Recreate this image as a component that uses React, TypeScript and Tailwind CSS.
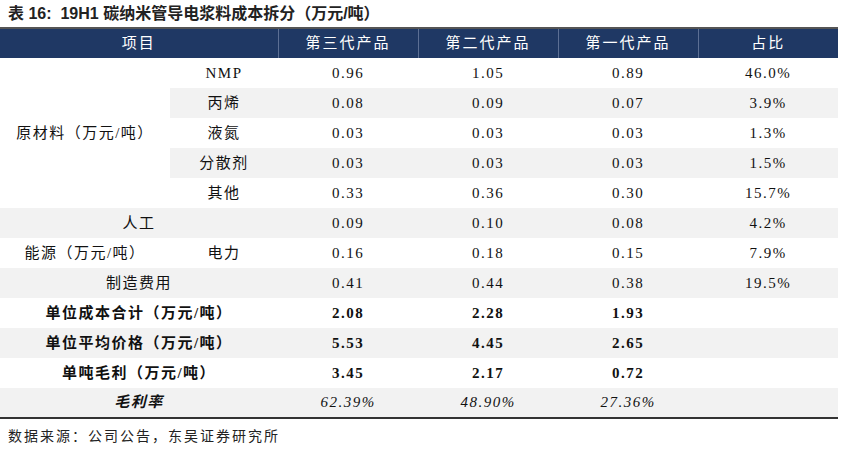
const rows: {
  label?: string;
  sub?: string;
  span?: boolean;
  vals: string[];
  gray: boolean;
  kind?: "bold" | "italic";
}[] = [
  { sub: "NMP", vals: ["0.96", "1.05", "0.89", "46.0%"], gray: false },
  { sub: "丙烯", vals: ["0.08", "0.09", "0.07", "3.9%"], gray: true },
  { sub: "液氮", vals: ["0.03", "0.03", "0.03", "1.3%"], gray: false },
  { sub: "分散剂", vals: ["0.03", "0.03", "0.03", "1.5%"], gray: true },
  { sub: "其他", vals: ["0.33", "0.36", "0.30", "15.7%"], gray: false },
  { label: "人工", span: true, vals: ["0.09", "0.10", "0.08", "4.2%"], gray: true },
  { label: "能源（万元/吨）", sub: "电力", vals: ["0.16", "0.18", "0.15", "7.9%"], gray: false },
  { label: "制造费用", span: true, vals: ["0.41", "0.44", "0.38", "19.5%"], gray: true },
  { label: "单位成本合计（万元/吨）", span: true, vals: ["2.08", "2.28", "1.93", ""], gray: false, kind: "bold" },
  { label: "单位平均价格（万元/吨）", span: true, vals: ["5.53", "4.45", "2.65", ""], gray: true, kind: "bold" },
  { label: "单吨毛利（万元/吨）", span: true, vals: ["3.45", "2.17", "0.72", ""], gray: false, kind: "bold" },
  { label: "毛利率", span: true, vals: ["62.39%", "48.90%", "27.36%", ""], gray: true, kind: "italic" },
];

export default function App() {
  return (
    <div
      className="w-[845px] h-[471px] bg-white text-[#111] overflow-hidden"
      style={{ fontFamily: '"Liberation Serif", "Noto Sans CJK SC", serif' }}
    >
      <div
        className="h-[27px] pl-2 flex items-center text-[16px] font-bold text-[#222]"
        style={{ fontFamily: '"Liberation Sans", "Noto Sans CJK SC", sans-serif' }}
      >
        表 16:&nbsp; 19H1 碳纳米管导电浆料成本拆分（万元/吨）
      </div>
      <table className="w-[838px] table-fixed border-collapse border-t-2 border-t-[#555] border-b-2 border-b-[#333]">
        <colgroup>
          <col className="w-[170px]" />
          <col className="w-[108px]" />
          <col className="w-[140px]" />
          <col className="w-[140px]" />
          <col className="w-[140px]" />
          <col className="w-[140px]" />
        </colgroup>
        <thead>
          <tr className="h-[30px] bg-[#1f3864] text-white text-[15px] tracking-[2px]">
            <th colSpan={2} className="font-normal border-r border-[#5c6f94]">项目</th>
            <th className="font-normal border-r border-[#5c6f94]">第三代产品</th>
            <th className="font-normal border-r border-[#5c6f94]">第二代产品</th>
            <th className="font-normal border-r border-[#5c6f94]">第一代产品</th>
            <th className="font-normal">占比</th>
          </tr>
        </thead>
        <tbody className="text-[15px]">
          {rows.map((r, i) => {
            const bg = r.gray ? "bg-[#f2f2f2]" : "bg-white";
            const weight =
              r.kind === "bold" ? "font-bold" : r.kind === "italic" ? "font-bold italic" : "font-normal";
            return (
              <tr key={i} className="h-[30px]">
                {i === 0 && (
                  <td rowSpan={5} className="bg-white text-center tracking-[1.5px]">
                    原材料（万元/吨）
                  </td>
                )}
                {r.span ? (
                  <td colSpan={2} className={`${bg} ${weight} text-center tracking-[1.5px]`}>
                    {r.label}
                  </td>
                ) : r.label ? (
                  <>
                    <td className={`${bg} text-center tracking-[1.5px]`}>{r.label}</td>
                    <td className={`${bg} text-center tracking-[1.5px]`}>{r.sub}</td>
                  </>
                ) : (
                  <td className={`${bg} text-center tracking-[1.5px]`}>{r.sub}</td>
                )}
                {r.vals.map((v, j) => (
                  <td
                    key={j}
                    className={`${bg} ${r.kind === "italic" ? "italic" : r.kind === "bold" ? "font-bold" : ""} text-center tracking-[1.5px]`}
                  >
                    {v}
                  </td>
                ))}
              </tr>
            );
          })}
        </tbody>
      </table>
      <div className="pl-2 pt-[7px] text-[14px] tracking-[2px] text-[#222]">
        数据来源：公司公告，东吴证券研究所
      </div>
    </div>
  );
}
